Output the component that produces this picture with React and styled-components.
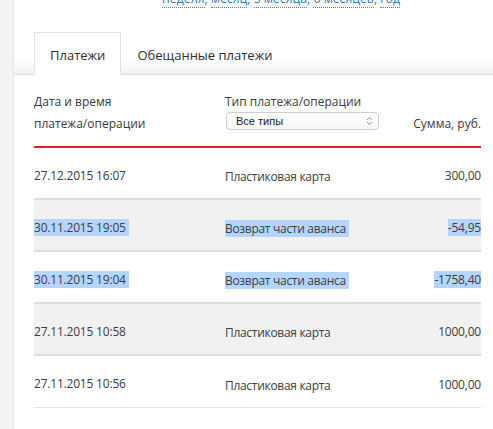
import React from "react";
import styled, { createGlobalStyle } from "styled-components";

const Global = createGlobalStyle`
  html, body { margin: 0; padding: 0; background: #fff; }
  body { font-family: "Open Sans", "Noto Sans", sans-serif; color: #3d3d3d; overflow: hidden; }
`;

const Page = styled.div`
  display: flex;
  width: 493px;
  height: 429px;
  overflow: hidden;
`;

const Sidebar = styled.div`
  width: 13px;
  flex: none;
  background: #f2f3f2;
  border-right: 1px solid #e3e4e3;
`;

const Main = styled.div`
  flex: 1;
  background: #fff;
  display: flex;
  flex-direction: column;
`;

const Periods = styled.div`
  margin-top: -10px;
  padding-left: 148px;
  font-size: 12.3px;
  line-height: 18px;
  color: #2b79b4;
  white-space: nowrap;
`;

const PeriodLink = styled.span`
  border-bottom: 1px dotted #2b8fc4;
`;

const TabBar = styled.div`
  margin-top: 24px;
  display: flex;
  padding-left: 20px;
  height: 42px;
  background: linear-gradient(to bottom, #fff 0, #fff 28px, #f1f1f1 42px);
  border-bottom: 1px solid #e2e2e2;
`;

const Tab = styled.div`
  display: flex;
  align-items: center;
  padding: 2px 15px 0;
  font-size: 13px;
  color: #2f2f2f;
  height: 43px;
  box-sizing: border-box;
  ${(p) =>
    p.$active
      ? `background: #fff; border: 1px solid #e2e2e2; border-bottom: none; margin-bottom: -1px;`
      : `border: 1px solid transparent;`}
`;

const Table = styled.div`
  padding: 0 12px 0 20px;
`;

const HeadRow = styled.div`
  display: grid;
  grid-template-columns: 191px 1fr auto;
  padding: 16px 0 11px;
  border-bottom: 2px solid #e31e25;
  font-size: 12px;
  line-height: 22px;
  color: #3a3a3a;
`;

const HeadCell = styled.div`
  display: flex;
  flex-direction: column;
  justify-content: ${(p) => (p.$bottom ? "flex-end" : "flex-start")};
`;

const Select = styled.div`
  width: 153px;
  height: 18px;
  box-sizing: border-box;
  margin-left: 1px;
  margin-top: -1px;
  border: 1px solid #cfcfcf;
  border-radius: 4px;
  background: linear-gradient(#fff, #f7f7f7);
  display: flex;
  align-items: center;
  justify-content: space-between;
  padding: 0 5px 0 9px;
  font-family: "Liberation Sans", Arial, sans-serif;
  font-size: 11px;
  color: #222;
`;

const Row = styled.div`
  display: grid;
  grid-template-columns: 191px 1fr auto;
  align-items: center;
  height: 52px;
  padding-top: 5px;
  box-sizing: border-box;
  background: ${(p) => (p.$shade ? "#f1f1f1" : "#fff")};
  border-bottom: ${(p) => (p.$last ? "1px solid #e4e4e4" : "2px solid #dcdcdc")};
  font-size: 12px;
  color: #3d3d3d;
`;

const DateCell = styled.div`
  letter-spacing: -0.2px;
  line-height: 16px;
`;

const TypeCell = styled.div`
  padding-top: 2px;
  line-height: 19px;
  letter-spacing: -0.3px;
`;

const SumCell = styled.div`
  text-align: right;
  line-height: 19px;
  letter-spacing: -0.2px;
`;

const Sel = styled.span`
  background: ${(p) => (p.$on ? "#b4d5fd" : "transparent")};
  padding-right: ${(p) => (p.$pad ? "3px" : "0")};
`;

const Chevrons = () => (
  <svg width="7" height="10" viewBox="0 0 7 10">
    <path d="M1 4 L3.5 1.5 L6 4 M1 6 L3.5 8.5 L6 6" fill="none" stroke="#888" strokeWidth="0.9" />
  </svg>
);

const rows = [
  { d: "27.12.2015 16:07", t: "Пластиковая карта", s: "300,00" },
  { d: "30.11.2015 19:05", t: "Возврат части аванса", s: "-54,95", sel: true },
  { d: "30.11.2015 19:04", t: "Возврат части аванса", s: "-1758,40", sel: true },
  { d: "27.11.2015 10:58", t: "Пластиковая карта", s: "1000,00" },
  { d: "27.11.2015 10:56", t: "Пластиковая карта", s: "1000,00" },
];

export default function App() {
  return (
    <>
      <Global />
      <Page>
        <Sidebar />
        <Main>
          <Periods>
            <PeriodLink>неделя</PeriodLink>, <PeriodLink>месяц</PeriodLink>,{" "}
            <PeriodLink>3 месяца</PeriodLink>, <PeriodLink>6 месяцев</PeriodLink>,{" "}
            <PeriodLink>год</PeriodLink>
          </Periods>
          <TabBar>
            <Tab $active>Платежи</Tab>
            <Tab>Обещанные платежи</Tab>
          </TabBar>
          <Table>
            <HeadRow>
              <HeadCell>
                <span>Дата и время</span>
                <span>платежа/операции</span>
              </HeadCell>
              <HeadCell>
                <span>Тип платежа/операции</span>
                <Select>
                  <span>Все типы</span>
                  <Chevrons />
                </Select>
              </HeadCell>
              <HeadCell $bottom>
                <span>Сумма, руб.</span>
              </HeadCell>
            </HeadRow>
            {rows.map((r, i) => (
              <Row key={i} $shade={i % 2 === 1} $last={i === rows.length - 1}>
                <DateCell>
                  <Sel $on={r.sel} $pad>{r.d}</Sel>
                </DateCell>
                <TypeCell>
                  <Sel $on={r.sel} $pad>{r.t}</Sel>
                </TypeCell>
                <SumCell>
                  <Sel $on={r.sel}>{r.s}</Sel>
                </SumCell>
              </Row>
            ))}
          </Table>
        </Main>
      </Page>
    </>
  );
}
